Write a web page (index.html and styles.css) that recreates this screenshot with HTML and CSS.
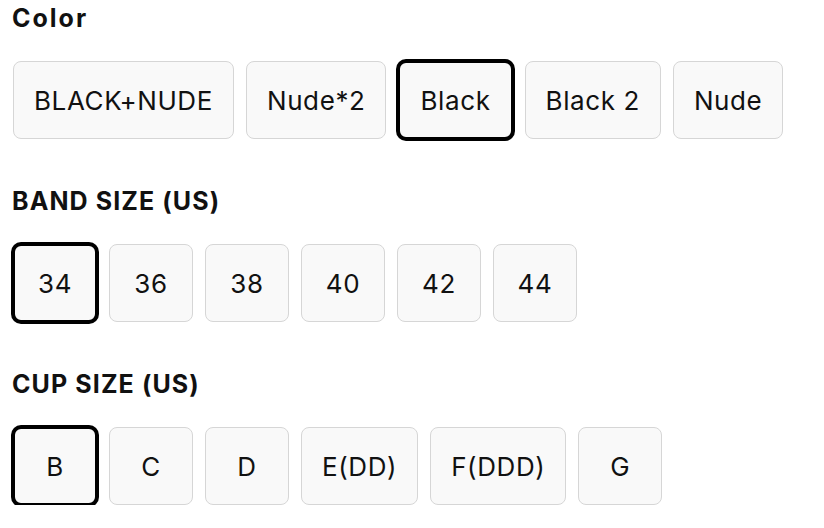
FILE: index.html
```html
<!DOCTYPE html>
<html lang="en">
<head>
<meta charset="utf-8">
<title>Variant picker</title>
<link rel="stylesheet" href="styles.css">
</head>
<body>
<div class="picker">
  <section class="group">
    <h3 class="title title-color">Color</h3>
    <div class="options">
      <button class="opt">BLACK+NUDE</button>
      <button class="opt">Nude*2</button>
      <button class="opt sel">Black</button>
      <button class="opt">Black 2</button>
      <button class="opt">Nude</button>
    </div>
  </section>
  <section class="group">
    <h3 class="title">BAND SIZE (US)</h3>
    <div class="options">
      <button class="opt sel">34</button>
      <button class="opt">36</button>
      <button class="opt">38</button>
      <button class="opt">40</button>
      <button class="opt">42</button>
      <button class="opt">44</button>
    </div>
  </section>
  <section class="group">
    <h3 class="title">CUP SIZE (US)</h3>
    <div class="options">
      <button class="opt sel">B</button>
      <button class="opt">C</button>
      <button class="opt">D</button>
      <button class="opt">E(DD)</button>
      <button class="opt">F(DDD)</button>
      <button class="opt">G</button>
    </div>
  </section>
</div>
</body>
</html>
```

FILE: styles.css
```css
* { box-sizing: border-box; }
html, body { margin: 0; padding: 0; background: #fff; }
body { font-family: Inter, "Noto Sans", sans-serif; color: #111; }

.picker {
  padding: 2px 0 0 13px;
  display: flex;
  flex-direction: column;
  gap: 46px;
}

.title {
  margin: 0 0 27px -1px;
  font-size: 25px;
  line-height: 32px;
  font-weight: 700;
  color: #111;
  letter-spacing: 1.1px;
}

.title-color { letter-spacing: 2px; }

.options {
  display: flex;
  gap: 12px;
}

.opt {
  height: 78px;
  min-width: 84px;
  padding: 0 20px;
  border: 1px solid #d6d6d6;
  border-radius: 8px;
  background: #f9f9f9;
  font-family: inherit;
  font-size: 26px;
  font-weight: 400;
  color: #111;
  display: flex;
  align-items: center;
  justify-content: center;
  letter-spacing: 0.6px;
}

.opt.sel {
  border: 2px solid #000;
  box-shadow: 0 0 0 2px #000;
}
```
